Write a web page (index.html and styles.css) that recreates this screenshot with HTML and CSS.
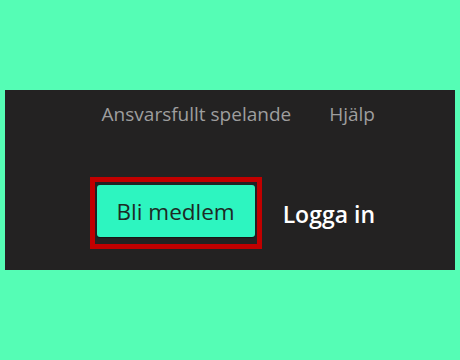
FILE: index.html
```html
<!DOCTYPE html>
<html lang="sv">
<head>
<meta charset="utf-8">
<link rel="stylesheet" href="styles.css">
</head>
<body>
<div class="panel">
  <nav class="links">
    <a class="link">Ansvarsfullt spelande</a>
    <a class="link">Hjälp</a>
  </nav>
  <div class="actions">
    <div class="highlight">
      <button class="join">Bli medlem</button>
    </div>
    <a class="login">Logga in</a>
  </div>
</div>
</body>
</html>
```
FILE: styles.css
```css
html, body {
  margin: 0;
  padding: 0;
}
body {
  background: #55fdb5;
  width: 460px;
  height: 360px;
  padding-top: 90px;
  box-sizing: border-box;
  font-family: "Open Sans", "Noto Sans", sans-serif;
}
.panel {
  margin: 0 5px;
  height: 180px;
  background: #232222;
  display: flex;
  flex-direction: column;
  align-items: flex-end;
  padding-right: 80px;
  box-sizing: border-box;
}
.links {
  display: flex;
  gap: 38px;
  margin-top: 9px;
}
.link {
  color: #9e9e9e;
  font-size: 19px;
  line-height: 30px;
}
.actions {
  display: flex;
  align-items: center;
  gap: 21px;
  margin-top: 48px;
}
.highlight {
  border: 5px solid #c10000;
  padding: 3px 2px 7px 2px;
}
.join {
  display: block;
  width: 158px;
  height: 52px;
  border: none;
  border-radius: 3px;
  background: #2df5c0;
  color: #1d2a25;
  font-family: "Open Sans", "Noto Sans", sans-serif;
  font-size: 22.5px;
  padding: 0;
  box-shadow: 0 1px 1px rgba(0, 0, 0, 0.4);
}
.login {
  color: #ffffff;
  font-weight: 600;
  font-size: 23px;
  margin-top: 2px;
}
```
